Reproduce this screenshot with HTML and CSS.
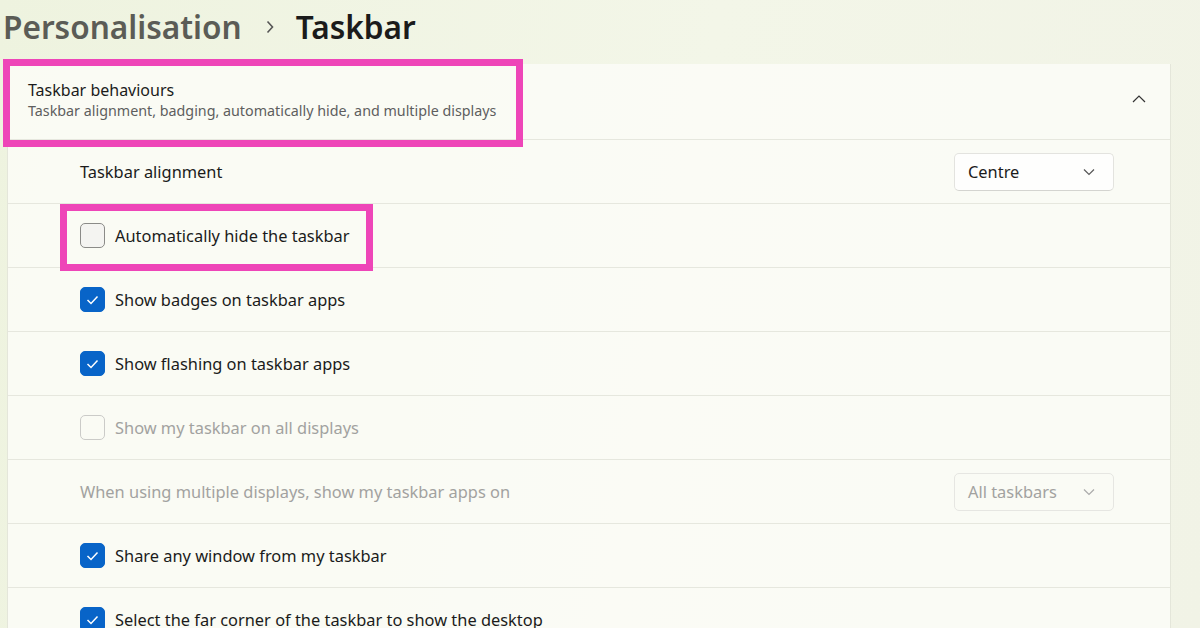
FILE: index.html
```html
<!DOCTYPE html>
<html lang="en">
<head>
    <meta charset="UTF-8">
    <title>Taskbar</title>
    <link rel="stylesheet" href="styles.css">
</head>
<body>
    <div class="page">
        <h1 class="breadcrumb">
            <span class="crumb-parent">Personalisation</span>
            <svg class="crumb-sep" width="10" height="14" viewBox="0 0 10 14"><path d="M2.5 1.5 L7.5 7 L2.5 12.5" fill="none" stroke="#555" stroke-width="1.6"/></svg>
            <span class="crumb-current">Taskbar</span>
        </h1>

        <div class="card">
            <div class="card-header">
                <div class="card-titles">
                    <div class="card-title">Taskbar behaviours</div>
                    <div class="card-subtitle">Taskbar alignment, badging, automatically hide, and multiple displays</div>
                </div>
                <svg class="chevron-up" width="14" height="9" viewBox="0 0 14 9"><path d="M1 8 L7 2 L13 8" fill="none" stroke="#333" stroke-width="1.2"/></svg>
            </div>

            <div class="row">
                <span class="row-label">Taskbar alignment</span>
                <div class="dropdown">
                    <span>Centre</span>
                    <svg width="12" height="8" viewBox="0 0 12 8"><path d="M1 1.5 L6 6.5 L11 1.5" fill="none" stroke="#555" stroke-width="1.2"/></svg>
                </div>
            </div>
            <div class="row">
                <span class="box"></span>
                <span class="row-label">Automatically hide the taskbar</span>
            </div>
            <div class="row">
                <span class="box checked"><svg width="13" height="10" viewBox="0 0 13 10"><path d="M1.5 5 L5 8.5 L11.5 1.5" fill="none" stroke="#fff" stroke-width="1.5"/></svg></span>
                <span class="row-label">Show badges on taskbar apps</span>
            </div>
            <div class="row">
                <span class="box checked"><svg width="13" height="10" viewBox="0 0 13 10"><path d="M1.5 5 L5 8.5 L11.5 1.5" fill="none" stroke="#fff" stroke-width="1.5"/></svg></span>
                <span class="row-label">Show flashing on taskbar apps</span>
            </div>
            <div class="row disabled">
                <span class="box"></span>
                <span class="row-label">Show my taskbar on all displays</span>
            </div>
            <div class="row disabled">
                <span class="row-label">When using multiple displays, show my taskbar apps on</span>
                <div class="dropdown">
                    <span>All taskbars</span>
                    <svg width="12" height="8" viewBox="0 0 12 8"><path d="M1 1.5 L6 6.5 L11 1.5" fill="none" stroke="#aaa" stroke-width="1.2"/></svg>
                </div>
            </div>
            <div class="row">
                <span class="box checked"><svg width="13" height="10" viewBox="0 0 13 10"><path d="M1.5 5 L5 8.5 L11.5 1.5" fill="none" stroke="#fff" stroke-width="1.5"/></svg></span>
                <span class="row-label">Share any window from my taskbar</span>
            </div>
            <div class="row">
                <span class="box checked"><svg width="13" height="10" viewBox="0 0 13 10"><path d="M1.5 5 L5 8.5 L11.5 1.5" fill="none" stroke="#fff" stroke-width="1.5"/></svg></span>
                <span class="row-label">Select the far corner of the taskbar to show the desktop</span>
            </div>
        </div>

        <div class="highlight highlight-header"></div>
        <div class="highlight highlight-hide"></div>
    </div>
</body>
</html>
```

FILE: styles.css
```css
body {
    margin: 0;
    font-family: "Noto Sans", "Open Sans", sans-serif;
    background: linear-gradient(100deg, #eef3df 0%, #f3f6e8 55%, #f1f3e6 100%);
    height: 628px;
    overflow: hidden;
}
.page {
    position: relative;
    height: 628px;
}
.breadcrumb {
    margin: 0;
    height: 52px;
    padding: 0 0 0 3px;
    display: flex;
    align-items: center;
    font-weight: 600;
    font-size: 31.6px;
}
.crumb-parent {
    color: #5b5c56;
}
.crumb-sep {
    margin: 2px 21px 0 23px;
}
.crumb-current {
    color: #1b1b1b;
}
.card {
    margin: 12px 0 0 7px;
    width: 1162px;
    background: rgba(251, 251, 247, 0.85);
    border-left: 1px solid #e4e6da;
    border-right: 1px solid #e4e6da;
}
.card-header {
    height: 75px;
    display: flex;
    align-items: center;
    justify-content: space-between;
    padding: 0 24px 0 20px;
}
.card-titles {
    margin-top: -4px;
}
.card-title {
    font-size: 16px;
    color: #1b1b1b;
    line-height: 22px;
}
.card-subtitle {
    font-size: 14.3px;
    color: #5e5e5e;
    line-height: 20px;
}
.chevron-up {
    margin-top: -6px;
}
.row {
    height: 63px;
    border-top: 1px solid #e6e7de;
    display: flex;
    align-items: center;
    padding: 0 55px 0 72px;
    color: #1b1b1b;
    font-size: 16.4px;
}
.row .row-label {
    flex: 1;
}
.row.disabled {
    color: #a2a2a0;
}
.box {
    width: 23px;
    height: 23px;
    border: 1px solid #8b8b88;
    border-radius: 5px;
    background: #f4f4f1;
    margin-right: 10px;
    display: flex;
    align-items: center;
    justify-content: center;
}
.box.checked {
    background: #0864c8;
    border-color: #0864c8;
}
.row.disabled .box {
    border-color: #cbcbc8;
    background: transparent;
}
.dropdown {
    width: 160px;
    height: 38px;
    box-sizing: border-box;
    border: 1px solid #e3e3df;
    border-bottom-color: #d4d4d0;
    border-radius: 5px;
    background: #fefefd;
    display: flex;
    align-items: center;
    justify-content: space-between;
    padding: 0 18px 0 13px;
    margin-right: 1px;
    font-size: 16.4px;
}
.row.disabled .dropdown {
    background: transparent;
    border-color: #e6e6e2;
}
.highlight {
    position: absolute;
    border: 7px solid #ee45b8;
}
.highlight-header {
    left: 3px;
    top: 59px;
    width: 506px;
    height: 74px;
}
.highlight-hide {
    left: 60px;
    top: 204px;
    width: 299px;
    height: 53px;
}
```
